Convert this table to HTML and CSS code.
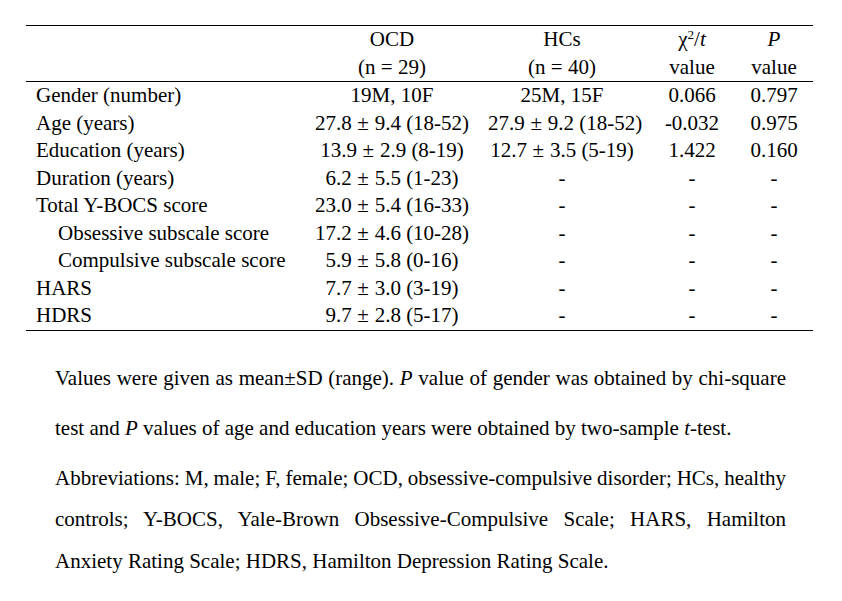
FILE: index.html
```html
<!DOCTYPE html>
<html lang="en">
<head>
<meta charset="utf-8">
<title>Demographic and clinical characteristics</title>
<link rel="stylesheet" href="styles.css">
</head>
<body>
<main class="page">
  <table class="stats">
    <colgroup>
      <col class="c-label">
      <col class="c-ocd">
      <col class="c-hc">
      <col class="c-chi">
      <col class="c-p">
    </colgroup>
    <thead>
      <tr>
        <th class="label"></th>
        <th>OCD<br>(n = 29)</th>
        <th>HCs<br>(n = 40)</th>
        <th>χ<sup>2</sup>/<i>t</i><br>value</th>
        <th class="last"><i>P</i><br>value</th>
      </tr>
    </thead>
    <tbody>
      <tr><td class="label">Gender (number)</td><td>19M, 10F</td><td>25M, 15F</td><td>0.066</td><td class="last">0.797</td></tr>
      <tr><td class="label">Age (years)</td><td>27.8<span class="pm">±</span>9.4 (18-52)</td><td>27.9<span class="pm">±</span>9.2 (18-52)</td><td>-0.032</td><td class="last">0.975</td></tr>
      <tr><td class="label">Education (years)</td><td>13.9<span class="pm">±</span>2.9 (8-19)</td><td>12.7<span class="pm">±</span>3.5 (5-19)</td><td>1.422</td><td class="last">0.160</td></tr>
      <tr><td class="label">Duration (years)</td><td>6.2<span class="pm">±</span>5.5 (1-23)</td><td>-</td><td>-</td><td class="last">-</td></tr>
      <tr><td class="label">Total Y-BOCS score</td><td>23.0<span class="pm">±</span>5.4 (16-33)</td><td>-</td><td>-</td><td class="last">-</td></tr>
      <tr><td class="label sub">Obsessive subscale score</td><td>17.2<span class="pm">±</span>4.6 (10-28)</td><td>-</td><td>-</td><td class="last">-</td></tr>
      <tr><td class="label sub">Compulsive subscale score</td><td>5.9<span class="pm">±</span>5.8 (0-16)</td><td>-</td><td>-</td><td class="last">-</td></tr>
      <tr><td class="label">HARS</td><td>7.7<span class="pm">±</span>3.0 (3-19)</td><td>-</td><td>-</td><td class="last">-</td></tr>
      <tr><td class="label">HDRS</td><td>9.7<span class="pm">±</span>2.8 (5-17)</td><td>-</td><td>-</td><td class="last">-</td></tr>
    </tbody>
  </table>

  <div class="notes">
    <p class="note note-first">
      <span class="line full">Values were given as mean±SD (range). <i>P</i> value of gender was obtained by chi-square</span>
      <span class="line">test and <i>P</i> values of age and education years were obtained by two-sample <i>t</i>-test.</span>
    </p>
    <p class="note note-second">
      <span class="line full tight">Abbreviations: M, male; F, female; OCD, obsessive-compulsive disorder; HCs, healthy</span>
      <span class="line full">controls; Y-BOCS, Yale-Brown Obsessive-Compulsive Scale; HARS, Hamilton</span>
      <span class="line">Anxiety Rating Scale; HDRS, Hamilton Depression Rating Scale.</span>
    </p>
  </div>
</main>
</body>
</html>
```

FILE: styles.css
```css
html, body {
  margin: 0;
  padding: 0;
  background: #ffffff;
}

body {
  font-family: "Liberation Serif", "Times New Roman", serif;
  font-size: 21px;
  color: #000000;
}

.page {
  padding: 25px 0 0 26px;
}

.stats {
  width: 787px;
  border-collapse: collapse;
  table-layout: fixed;
}

.c-label { width: 270px; }
.c-ocd   { width: 192px; }
.c-hc    { width: 148px; }
.c-chi   { width: 112px; }
.c-p     { width: 65px; }

.stats thead tr {
  border-top: 1px solid #000;
  border-bottom: 1px solid #000;
}

.stats tbody tr:last-child {
  border-bottom: 1px solid #000;
}

.stats th {
  font-weight: normal;
  text-align: center;
  padding: 0;
  line-height: 27.5px;
  vertical-align: top;
}

.stats td {
  padding: 0;
  text-align: center;
  line-height: 27.5px;
  height: 27.5px;
  white-space: nowrap;
}

.stats .label {
  text-align: left;
  padding-left: 10px;
}

.stats .label.sub {
  padding-left: 32px;
}

.stats .last {
  padding-right: 13px;
}

.stats sup {
  font-size: 13px;
  line-height: 0;
  vertical-align: 7px;
}

.pm {
  display: inline-block;
  width: 23px;
  text-align: center;
}

.notes {
  width: 731px;
  margin: 22px 0 0 29px;
}

.note {
  margin: 0;
}

.line {
  display: block;
  white-space: nowrap;
  text-align: left;
}

.line.full {
  text-align: justify;
  text-align-last: justify;
}

.line.tight {
  word-spacing: -2px;
}

.note-first {
  line-height: 50px;
}

.note-second {
  line-height: 41.5px;
  margin-top: 5px;
}
```
